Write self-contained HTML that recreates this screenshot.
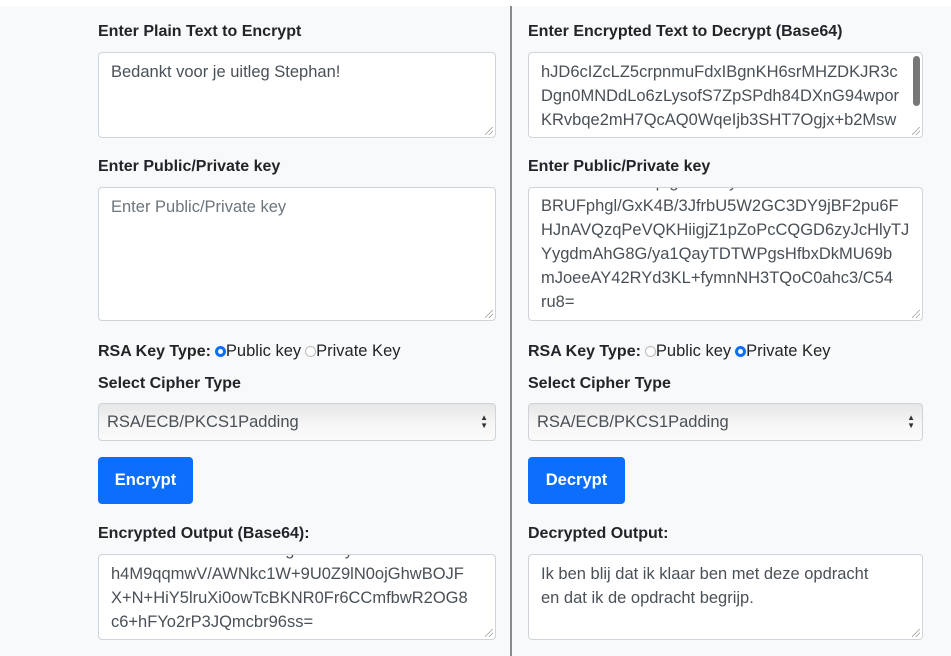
<!DOCTYPE html>
<html><head><meta charset="utf-8"><style>
*{box-sizing:border-box;margin:0;padding:0}
body{width:951px;height:656px;overflow:hidden;background:#f8f9fb;font-family:"Liberation Sans",sans-serif;color:#212529;position:relative}
.top{position:absolute;left:0;top:0;width:951px;height:6px;background:#fff}
.div{position:absolute;left:510px;top:6px;width:2px;height:650px;background:#8a8a8a}
.lbl{position:absolute;font-weight:bold;font-size:16px;color:#212529;white-space:nowrap}
.ta{position:absolute;background:#fff;border:1px solid #ced4da;border-radius:4px;overflow:hidden}
.ta .t{position:absolute;left:12px;font-size:16.5px;color:#495057;white-space:pre;line-height:24px}
.rz{position:absolute;right:2px;bottom:2px;width:8px;height:8px;background:linear-gradient(135deg,transparent 45%,#999 45%,#999 52%,transparent 52%,transparent 70%,#999 70%,#999 77%,transparent 77%)}
.sel{position:absolute;height:38px;border:1px solid #ced4da;border-radius:4px;background:linear-gradient(#e6e6e6,#f7f7f7 60%,#fafafa);font-size:16.5px;color:#495057;padding:9px 8px;white-space:nowrap}
.sel .ar{position:absolute;right:7px;top:10px;font-size:8px;line-height:8px;color:#333}
.btn{position:absolute;height:47px;background:#0d6efd;color:#fff;font-weight:bold;font-size:16.5px;border-radius:4px;text-align:center;line-height:47px}
.r{display:inline-block;width:11px;height:11px;border-radius:50%;border:1px solid #bbb;background:#fff;vertical-align:-1px;margin-left:4px}
.r.on{border:3px solid #0d6efd}
.rl{font-weight:normal;font-size:16.5px}
</style></head><body>
<div class="top"></div>
<div class="div"></div>

<div class="lbl" style="left:98px;top:23px">Enter Plain Text to Encrypt</div>
<div class="ta" style="left:98px;top:52px;width:398px;height:86px"><div class="t" style="top:7px">Bedankt voor je uitleg Stephan!</div><div class="rz"></div></div>

<div class="lbl" style="left:98px;top:158px">Enter Public/Private key</div>
<div class="ta" style="left:98px;top:187px;width:398px;height:134px"><div class="t" style="top:7px;color:#6c757d">Enter Public/Private key</div><div class="rz"></div></div>

<div class="lbl" style="left:98px;top:342px">RSA Key Type:<span class="r on"></span><span class="rl">Public key</span><span class="r"></span><span class="rl">Private Key</span></div>
<div class="lbl" style="left:98px;top:375px">Select Cipher Type</div>
<div class="sel" style="left:98px;top:403px;width:398px">RSA/ECB/PKCS1Padding<div class="ar">▲<br>▼</div></div>
<div class="btn" style="left:98px;top:457px;width:95px">Encrypt</div>

<div class="lbl" style="left:98px;top:525px">Encrypted Output (Base64):</div>
<div class="ta" style="left:98px;top:554px;width:398px;height:86px">
<div class="t" style="top:-17px">                                      g           y</div>
<div class="t" style="top:7px">h4M9qqmwV/AWNkc1W+9U0Z9lN0ojGhwBOJF</div>
<div class="t" style="top:31px">X+N+HiY5lruXi0owTcBKNR0Fr6CCmfbwR2OG8</div>
<div class="t" style="top:55px">c6+hFYo2rP3JQmcbr96ss=</div><div class="rz"></div></div>

<div class="lbl" style="left:528px;top:23px">Enter Encrypted Text to Decrypt (Base64)</div>
<div class="ta" style="left:528px;top:52px;width:395px;height:86px">
<div class="t" style="top:7px">hJD6cIZcLZ5crpnmuFdxIBgnKH6srMHZDKJR3c</div>
<div class="t" style="top:31px">Dgn0MNDdLo6zLysofS7ZpSPdh84DXnG94wpor</div>
<div class="t" style="top:55px">KRvbqe2mH7QcAQ0WqeIjb3SHT7Ogjx+b2Msw</div>
<div class="t" style="top:79px">FkJd+HEYH/cvbEXz0xPQljzIkz+axAcfjU85H6</div>
<div style="position:absolute;right:2px;top:3px;width:7px;height:50px;border-radius:4px;background:#777"></div><div class="rz"></div></div>

<div class="lbl" style="left:528px;top:158px">Enter Public/Private key</div>
<div class="ta" style="left:528px;top:187px;width:395px;height:134px">
<div class="t" style="top:-18px">           /             p g           y</div>
<div class="t" style="top:6px">BRUFphgl/GxK4B/3JfrbU5W2GC3DY9jBF2pu6F</div>
<div class="t" style="top:30px">HJnAVQzqPeVQKHiigjZ1pZoPcCQGD6zyJcHlyTJ</div>
<div class="t" style="top:54px">YygdmAhG8G/ya1QayTDTWPgsHfbxDkMU69b</div>
<div class="t" style="top:78px">mJoeeAY42RYd3KL+fymnNH3TQoC0ahc3/C54</div>
<div class="t" style="top:102px">ru8=</div><div class="rz"></div></div>

<div class="lbl" style="left:528px;top:342px">RSA Key Type:<span class="r"></span><span class="rl">Public key</span><span class="r on"></span><span class="rl">Private Key</span></div>
<div class="lbl" style="left:528px;top:375px">Select Cipher Type</div>
<div class="sel" style="left:528px;top:403px;width:395px">RSA/ECB/PKCS1Padding<div class="ar">▲<br>▼</div></div>
<div class="btn" style="left:528px;top:457px;width:97px">Decrypt</div>

<div class="lbl" style="left:528px;top:525px">Decrypted Output:</div>
<div class="ta" style="left:528px;top:554px;width:395px;height:86px">
<div class="t" style="top:7px">Ik ben blij dat ik klaar ben met deze opdracht</div>
<div class="t" style="top:31px">en dat ik de opdracht begrijp.</div><div class="rz"></div></div>
</body></html>
